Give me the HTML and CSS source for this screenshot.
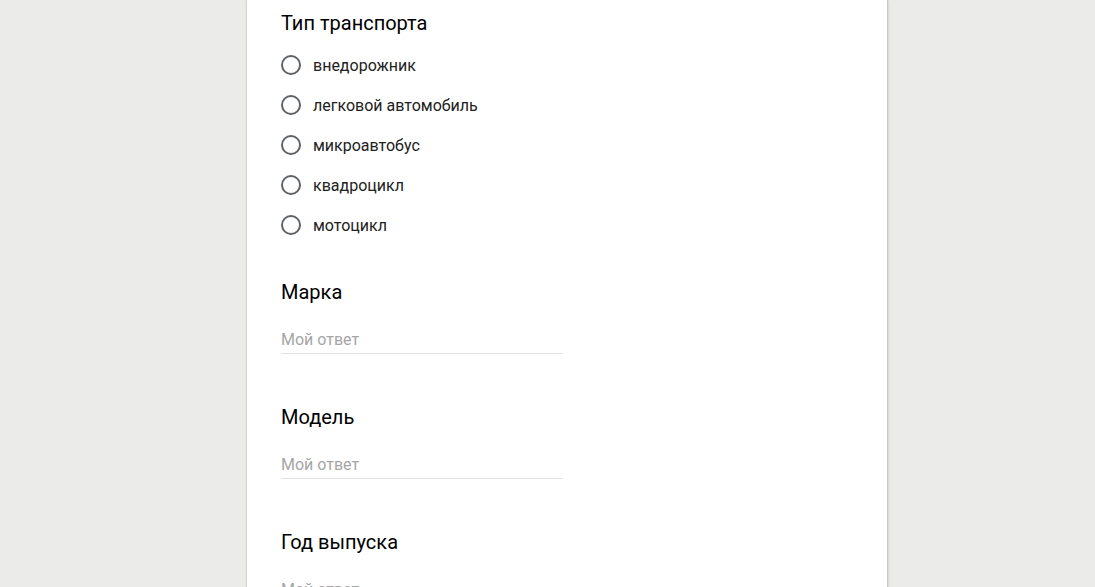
FILE: index.html
```html
<!DOCTYPE html>
<html lang="ru">
<head>
<meta charset="utf-8">
<link rel="stylesheet" href="styles.css">
</head>
<body>
<div class="card">
  <section class="question">
    <div class="q-title">Тип транспорта</div>
    <div class="options">
      <label class="option"><span class="radio"></span><span class="opt-text">внедорожник</span></label>
      <label class="option"><span class="radio"></span><span class="opt-text">легковой автомобиль</span></label>
      <label class="option"><span class="radio"></span><span class="opt-text">микроавтобус</span></label>
      <label class="option"><span class="radio"></span><span class="opt-text">квадроцикл</span></label>
      <label class="option"><span class="radio"></span><span class="opt-text">мотоцикл</span></label>
    </div>
  </section>
  <section class="question text-q">
    <div class="q-title">Марка</div>
    <div class="answer">Мой ответ</div>
  </section>
  <section class="question text-q">
    <div class="q-title">Модель</div>
    <div class="answer">Мой ответ</div>
  </section>
  <section class="question text-q">
    <div class="q-title">Год выпуска</div>
    <div class="answer">Мой ответ</div>
  </section>
</div>
</body>
</html>
```
FILE: styles.css
```css
html, body {
  margin: 0;
  padding: 0;
  height: 100%;
  overflow: hidden;
}
body {
  background: #ebebe9;
  font-family: Roboto, "Liberation Sans", Arial, sans-serif;
  color: #202124;
}
.card {
  margin-left: 247px;
  width: 640px;
  min-height: 100%;
  background: #fff;
  box-shadow: 0 0 2px rgba(0,0,0,0.25), 1px 0 3px rgba(0,0,0,0.12);
  padding: 11px 34px 0;
  box-sizing: border-box;
  display: flex;
  flex-direction: column;
}
.q-title {
  font-size: 20px;
  line-height: 24px;
  color: #000;
}
.options {
  margin-top: 10px;
  display: flex;
  flex-direction: column;
}
.option {
  height: 40px;
  display: flex;
  align-items: center;
}
.radio {
  width: 16px;
  height: 16px;
  border: 2px solid #5f6368;
  border-radius: 50%;
  flex: none;
}
.opt-text {
  margin-left: 12px;
  font-size: 16px;
  color: #212121;
}
.text-q {
  margin-top: 35px;
}
.text-q + .text-q {
  margin-top: 51px;
}
.answer {
  margin-top: 26px;
  width: 282px;
  font-size: 16px;
  line-height: 20px;
  padding-bottom: 3px;
  color: #a6a6a6;
  border-bottom: 1px solid #e0e0e0;
}
```
